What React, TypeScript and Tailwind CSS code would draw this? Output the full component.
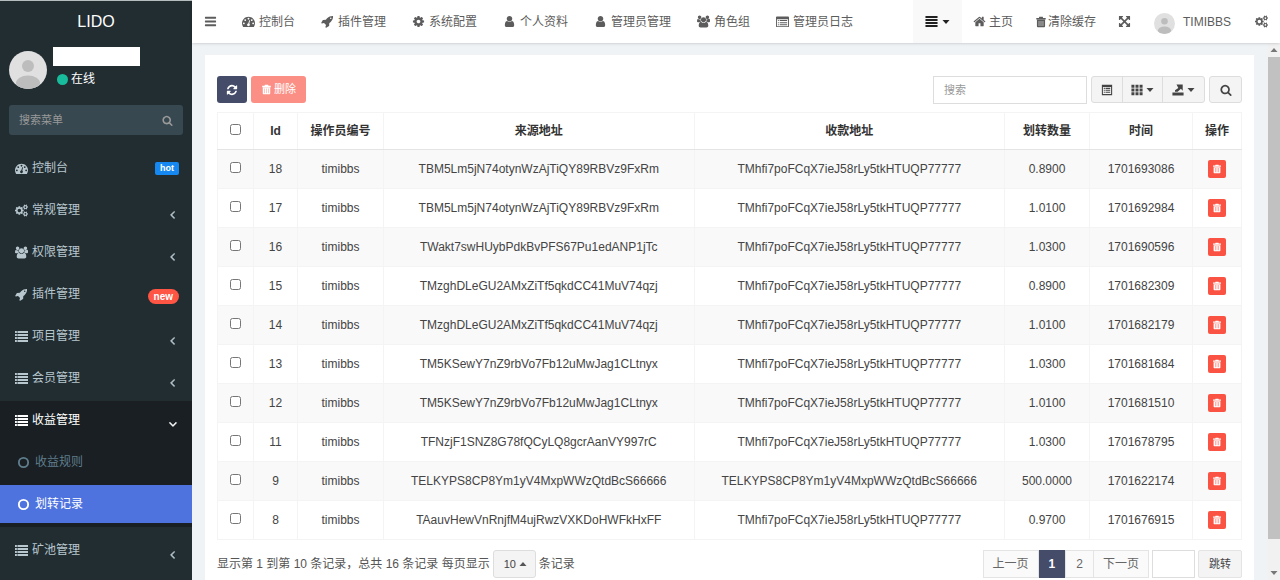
import React from "react";
import clsx from "clsx";

const ICONS = {
    bars: { w: 1792, d: "M1664 1344v128q0 26-19 45t-45 19h-1408q-26 0-45-19t-19-45v-128q0-26 19-45t45-19h1408q26 0 45 19t19 45zm0-512v128q0 26-19 45t-45 19h-1408q-26 0-45-19t-19-45v-128q0-26 19-45t45-19h1408q26 0 45 19t19 45zm0-512v128q0 26-19 45t-45 19h-1408q-26 0-45-19t-19-45v-128q0-26 19-45t45-19h1408q26 0 45 19t19 45z" },
    search: { w: 1792, d: "M1216 832q0-185-131.5-316.5t-316.5-131.5-316.5 131.5-131.5 316.5 131.5 316.5 316.5 131.5 316.5-131.5 131.5-316.5zm512 832q0 52-38 90t-90 38q-54 0-90-38l-343-342q-179 124-399 124-143 0-273.5-55.5t-225-150-150-225-55.5-273.5 55.5-273.5 150-225 225-150 273.5-55.5 273.5 55.5 225 150 150 225 55.5 273.5q0 220-124 399l343 343q37 37 37 90z" },
    dashboard: { w: 1792, d: "M384 1152q0-53-37.5-90.5t-90.5-37.5-90.5 37.5-37.5 90.5 37.5 90.5 90.5 37.5 90.5-37.5 37.5-90.5zm192-448q0-53-37.5-90.5t-90.5-37.5-90.5 37.5-37.5 90.5 37.5 90.5 90.5 37.5 90.5-37.5 37.5-90.5zm428 481l101-382q6-26-7.5-48.5t-38.5-29.5-48 6.5-30 39.5l-101 382q-60 5-107 43.5t-63 98.5q-20 77 20 146t117 89 146-20 89-117q16-60-6-117t-72-91zm660-33q0-53-37.5-90.5t-90.5-37.5-90.5 37.5-37.5 90.5 37.5 90.5 90.5 37.5 90.5-37.5 37.5-90.5zm-640-640q0-53-37.5-90.5t-90.5-37.5-90.5 37.5-37.5 90.5 37.5 90.5 90.5 37.5 90.5-37.5 37.5-90.5zm448 192q0-53-37.5-90.5t-90.5-37.5-90.5 37.5-37.5 90.5 37.5 90.5 90.5 37.5 90.5-37.5 37.5-90.5zm320 448q0 261-141 483-19 29-54 29h-1402q-35 0-54-29-141-221-141-483 0-182 71-348t191-286 286-191 348-71 348 71 286 191 191 286 71 348z" },
    rocket: { w: 1792, d: "M1440 448q0-40-28-68t-68-28-68 28-28 68 28 68 68 28 68-28 28-68zm224-288q0 249-75.5 430.5t-253.5 360.5q-81 80-195 176l-20 379q-2 16-16 26l-384 224q-7 4-16 4-12 0-23-9l-64-64q-13-14-8-32l85-276-281-281-276 85q-3 1-9 1-14 0-23-9l-64-64q-17-19-5-39l224-384q10-14 26-16l379-20q96-114 176-195 188-187 358-258t431-71q14 0 24 9.5t10 22.5z" },
    cog: { w: 1792, d: "M1152 896q0-106-75-181t-181-75-181 75-75 181 75 181 181 75 181-75 75-181zm512-109v222q0 12-8 23t-20 13l-185 28q-19 54-39 91 35 50 107 138 10 12 10 25t-9 23q-27 37-99 108t-94 71q-12 0-26-9l-138-108q-44 23-91 38-16 136-29 186-7 28-36 28h-222q-14 0-24.5-8.5t-11.5-21.5l-28-184q-49-16-90-37l-141 107q-10 9-25 9-14 0-25-11-126-114-165-168-7-10-7-23 0-12 8-23 15-21 51-66.5t54-70.5q-27-50-41-99l-183-27q-13-2-21-12.5t-8-23.5v-222q0-12 8-23t19-13l186-28q14-46 39-92-40-57-107-138-10-12-10-24 0-10 9-23 26-36 98.5-107.5t94.5-71.5q13 0 26 10l138 107q44-23 91-38 16-136 29-186 7-28 36-28h222q14 0 24.5 8.5t11.5 21.5l28 184q49 16 90 37l142-107q9-9 24-9 13 0 25 10 129 119 165 170 7 8 7 22 0 12-8 23-15 21-51 66.5t-54 70.5q26 50 41 98l183 28q13 2 21 12.5t8 23.5z" },
    cogs: { w: 1920, d: "M896 896q0-106-75-181t-181-75-181 75-75 181 75 181 181 75 181-75 75-181zm768 512q0-52-38-90t-90-38-90 38-38 90q0 53 37.5 90.5t90.5 37.5 90.5-37.5 37.5-90.5zm0-1024q0-52-38-90t-90-38-90 38-38 90q0 53 37.5 90.5t90.5 37.5 90.5-37.5 37.5-90.5zm-384 421v185q0 10-7 19.5t-16 10.5l-155 24q-11 35-32 76 34 48 90 115 7 11 7 20 0 12-7 19-23 30-82.5 89.5t-78.5 59.5q-11 0-21-7l-115-90q-37 19-77 31-11 108-23 155-7 24-30 24h-186q-11 0-20-7.5t-10-17.5l-23-153q-34-10-75-31l-118 89q-7 7-20 7-11 0-21-8-144-133-144-160 0-9 7-19 10-14 41-53t47-61q-23-44-35-82l-152-24q-10-1-17-9.5t-7-19.5v-185q0-10 7-19.5t16-10.5l155-24q11-35 32-76-34-48-90-115-7-11-7-20 0-12 7-20 22-30 82-89t79-59q11 0 21 7l115 90q34-18 77-32 11-108 23-154 7-24 30-24h186q11 0 20 7.5t10 17.5l23 153q34 10 75 31l118-89q8-7 20-7 11 0 21 8 144 133 144 160 0 8-7 19-12 16-42 54t-45 60q23 48 34 82l152 23q10 2 17 10.5t7 19.5zm640 533v140q0 16-149 31-12 27-30 52 51 113 51 138 0 4-4 7-122 71-124 71-8 0-46-47t-52-68q-20 2-30 2t-30-2q-14 21-52 68t-46 47q-2 0-124-71-4-3-4-7 0-25 51-138-18-25-30-52-149-15-149-31v-140q0-16 149-31 13-29 30-52-51-113-51-138 0-4 4-7 4-2 35-20t59-34 30-16q8 0 46 46.5t52 67.5q20-2 30-2t30 2q51-71 92-112l6-2q4 0 124 70 4 3 4 7 0 25-51 138 17 23 30 52 149 15 149 31zm0-1024v140q0 16-149 31-12 27-30 52 51 113 51 138 0 4-4 7-122 71-124 71-8 0-46-47t-52-68q-20 2-30 2t-30-2q-14 21-52 68t-46 47q-2 0-124-71-4-3-4-7 0-25 51-138-18-25-30-52-149-15-149-31v-140q0-16 149-31 13-29 30-52-51-113-51-138 0-4 4-7 4-2 35-20t59-34 30-16q8 0 46 46.5t52 67.5q20-2 30-2t30 2q51-71 92-112l6-2q4 0 124 70 4 3 4 7 0 25-51 138 17 23 30 52 149 15 149 31z" },
    user: { w: 1792, d: "M1536 1399q0 109-62.5 187t-150.5 78h-854q-88 0-150.5-78t-62.5-187q0-85 8.5-160.5t31.5-152 58.5-131 94-89 134.5-34.5q131 128 313 128t313-128q76 0 134.5 34.5t94 89 58.5 131 31.5 152 8.5 160.5zm-256-887q0 159-112.5 271.5t-271.5 112.5-271.5-112.5-112.5-271.5 112.5-271.5 271.5-112.5 271.5 112.5 112.5 271.5z" },
    group: { w: 1920, d: "M593 896q-162 5-265 128h-134q-82 0-138-40.5t-56-118.5q0-353 124-353 6 0 43.5 21t97.5 42.5 119 21.5q67 0 133-23-5 37-5 66 0 159 93 293zm1071 637q0 120-73 189.5t-194 69.5h-874q-121 0-194-69.5t-73-189.5q0-53 3.5-103.5t14-109 26.5-108.5 43-97.5 62-81 85.5-53.5 111.5-20q10 0 43 21.5t73 48 107 48 135 21.5 135-21.5 107-48 73-48 43-21.5q61 0 111.5 20t85.5 53.5 62 81 43 97.5 26.5 108.5 14 109 3.5 103.5zm-1024-1277q0 106-75 181t-181 75-181-75-75-181 75-181 181-75 181 75 75 181zm704 384q0 159-112.5 271.5t-271.5 112.5-271.5-112.5-112.5-271.5 112.5-271.5 271.5-112.5 271.5 112.5 112.5 271.5zm576 225q0 78-56 118.5t-138 40.5h-134q-103-123-265-128 93-134 93-293 0-29-5-66 66 23 133 23 59 0 119-21.5t97.5-42.5 43.5-21q124 0 124 353zm-128-609q0 106-75 181t-181 75-181-75-75-181 75-181 181-75 181 75 75 181z" },
    home: { w: 1792, d: "M1472 992v480q0 26-19 45t-45 19h-384v-384h-256v384h-384q-26 0-45-19t-19-45v-480q0-1 .5-3t.5-3l575-474 575 474q1 2 1 6zm223-69l-62 74q-8 9-21 11h-3q-13 0-21-7l-692-577-692 577q-12 8-24 7-13-2-21-11l-62-74q-8-10-7-23.5t11-21.5l719-599q32-26 76-26t76 26l244 204v-195q0-14 9-23t23-9h192q14 0 23 9t9 23v408l219 182q10 8 11 21.5t-7 23.5z" },
    trash: { w: 1792, d: "M640 128h512l64 160h384v224h-1408v-224h384zM288 576h1216v960q0 128-128 128h-960q-128 0-128-128zM560 736v752h80v-752zM856 736v752h80v-752zM1152 736v752h80v-752z" },
    refresh: { w: 1792, d: "M1639 1056q0 5-1 7-64 268-268 434.5t-478 166.5q-146 0-282.5-55t-243.5-157l-129 129q-19 19-45 19t-45-19-19-45v-448q0-26 19-45t45-19h448q26 0 45 19t19 45-19 45l-137 137q71 66 161 102t187 36q134 0 250-65t186-179q11-17 53-117 8-23 30-23h192q13 0 22.5 9.5t9.5 22.5zm25-800v448q0 26-19 45t-45 19h-448q-26 0-45-19t-19-45 19-45l138-138q-148-137-349-137-134 0-250 65t-186 179q-11 17-53 117-8 23-30 23h-199q-13 0-22.5-9.5t-9.5-22.5v-7q65-268 270-434.5t480-166.5q146 0 284 55.5t245 156.5l130-129q19-19 45-19t45 19 19 45z" },
    arrows: { w: 1792, d: "M1411 541l-355 355 355 355 144-144q29-31 70-14 39 17 39 59v448q0 26-19 45t-45 19h-448q-42 0-59-40-17-39 14-69l144-144-355-355-355 355 144 144q31 30 14 69-17 40-59 40h-448q-26 0-45-19t-19-45v-448q0-42 40-59 39-17 69 14l144 144 355-355-355-355-144 144q-19 19-45 19-12 0-24-5-40-17-40-59v-448q0-26 19-45t45-19h448q42 0 59 40 17 39-14 69l-144 144 355 355 355-355-144-144q-31-30-14-69 17-40 59-40h448q26 0 45 19t19 45v448q0 42-39 59-13 5-25 5-26 0-45-19z" },
    angle: { w: 1792, d: "M1203 544q0 13-10 23l-393 393 393 393q10 10 10 23t-10 23l-50 50q-10 10-23 10t-23-10l-466-466q-10-10-10-23t10-23l466-466q10-10 23-10t23 10l50 50q10 10 10 23z" },
    list: { w: 1792, d: "M0 128h256v288h-256zM340 128h1452v288h-1452zM0 544h256v288h-256zM340 544h1452v288h-1452zM0 960h256v288h-256zM340 960h1452v288h-1452zM0 1376h256v288h-256zM340 1376h1452v288h-1452z" },
    listAlt: { w: 1792, d: "M128 192h1536q128 0 128 128v1216q0 128-128 128h-1536q-128 0-128-128v-1216q0-128 128-128zM128 576v960h1536v-960zM256 704h128v128h-128zM512 704h1024v128h-1024zM256 992h128v128h-128zM512 992h1024v128h-1024zM256 1280h128v128h-128zM512 1280h1024v128h-1024z" },
    align: { w: 1792, d: "M64 128h1664v288h-1664zM64 544h1664v288h-1664zM64 960h1664v288h-1664zM64 1376h1664v288h-1664z" },
    detail: { w: 1792, d: "M128 128h1536v1536h-1536zM288 448v1056h1216v-1056zM416 576h160v160h-160zM672 576h704v160h-704zM416 864h160v160h-160zM672 864h704v160h-704zM416 1152h160v160h-160zM672 1152h704v160h-704z" },
    grid: { w: 1792, d: "M64 128h448v448h-448zM672 128h448v448h-448zM1280 128h448v448h-448zM64 672h448v448h-448zM672 672h448v448h-448zM1280 672h448v448h-448zM64 1216h448v448h-448zM672 1216h448v448h-448zM1280 1216h448v448h-448z" },
    exportFile: { w: 1792, d: "M672 64h928v928l-272-272-480 448h-400v-224l496-336zM64 1280h1664v448h-1664z" },
    ring: { w: 1792, d: "M896 128a768 768 0 1 0 0 1536a768 768 0 1 0 0-1536zM896 384a512 512 0 1 1 0 1024a512 512 0 1 1 0-1024z" },
};

type IconName = keyof typeof ICONS;

const Icon = ({ name, className = "size-[13px]" }: { name: IconName; className?: string }) => (
    <svg viewBox={`0 0 ${ICONS[name].w} 1792`} fill="currentColor" fillRule="evenodd" aria-hidden="true" className={clsx("shrink-0", className)}>
        <path d={ICONS[name].d} />
    </svg>
);

const Caret = ({ up = false, className = "" }: { up?: boolean; className?: string }) => (
    <svg viewBox="0 0 8 4" fill="currentColor" aria-hidden="true" className={clsx("h-1 w-2 shrink-0", up && "rotate-180", className)}>
        <path d="M0.5 0h7L4 4z" />
    </svg>
);

const Avatar = ({ className }: { className: string }) => (
    <svg viewBox="0 0 38 38" aria-hidden="true" className={clsx("shrink-0 rounded-full", className)}>
        <rect width="38" height="38" fill="#e0e0e0" />
        <circle cx="19" cy="15" r="6" fill="#bdbdbd" />
        <ellipse cx="19" cy="32" rx="12" ry="7.5" fill="#bdbdbd" />
    </svg>
);

const menu: { icon: IconName; label: string; badge?: "hot" | "new"; children?: string[] }[] = [
    { icon: "dashboard", label: "控制台", badge: "hot" },
    { icon: "cogs", label: "常规管理" },
    { icon: "group", label: "权限管理" },
    { icon: "rocket", label: "插件管理", badge: "new" },
    { icon: "list", label: "项目管理" },
    { icon: "list", label: "会员管理" },
    { icon: "list", label: "收益管理", children: ["收益规则", "划转记录"] },
    { icon: "list", label: "矿池管理" },
];

const tabs: { icon: IconName; label: string }[] = [
    { icon: "dashboard", label: "控制台" },
    { icon: "rocket", label: "插件管理" },
    { icon: "cog", label: "系统配置" },
    { icon: "user", label: "个人资料" },
    { icon: "user", label: "管理员管理" },
    { icon: "group", label: "角色组" },
    { icon: "listAlt", label: "管理员日志" },
];

const TO = "TMhfi7poFCqX7ieJ58rLy5tkHTUQP77777";

const rows = [
    { id: 18, from: "TBM5Lm5jN74otynWzAjTiQY89RBVz9FxRm", to: TO, amount: "0.8900", time: "1701693086" },
    { id: 17, from: "TBM5Lm5jN74otynWzAjTiQY89RBVz9FxRm", to: TO, amount: "1.0100", time: "1701692984" },
    { id: 16, from: "TWakt7swHUybPdkBvPFS67Pu1edANP1jTc", to: TO, amount: "1.0300", time: "1701690596" },
    { id: 15, from: "TMzghDLeGU2AMxZiTf5qkdCC41MuV74qzj", to: TO, amount: "0.8900", time: "1701682309" },
    { id: 14, from: "TMzghDLeGU2AMxZiTf5qkdCC41MuV74qzj", to: TO, amount: "1.0100", time: "1701682179" },
    { id: 13, from: "TM5KSewY7nZ9rbVo7Fb12uMwJag1CLtnyx", to: TO, amount: "1.0300", time: "1701681684" },
    { id: 12, from: "TM5KSewY7nZ9rbVo7Fb12uMwJag1CLtnyx", to: TO, amount: "1.0100", time: "1701681510" },
    { id: 11, from: "TFNzjF1SNZ8G78fQCyLQ8gcrAanVY997rC", to: TO, amount: "1.0300", time: "1701678795" },
    { id: 9, from: "TELKYPS8CP8Ym1yV4MxpWWzQtdBcS66666", to: "TELKYPS8CP8Ym1yV4MxpWWzQtdBcS66666", amount: "500.0000", time: "1701622174" },
    { id: 8, from: "TAauvHewVnRnjfM4ujRwzVXKDoHWFkHxFF", to: TO, amount: "0.9700", time: "1701676915" },
];

const Sidebar = () => {
    return (
        <aside className="flex w-48 shrink-0 flex-col overflow-hidden border-t border-[#b5bdbf] bg-[#222d32] text-[#b8c7ce]">
            <a href="#" className="flex h-[42px] shrink-0 items-center justify-center text-base text-white">LIDO</a>
            <div className="flex h-[54px] shrink-0 gap-[6px] px-[9px] pt-1 text-white">
                <Avatar className="mt-1 size-[38px]" />
                <div>
                    <div className="h-[19px] w-[87px] bg-white" />
                    <a href="#" className="flex items-center gap-[3px] pt-[5px] pl-1 leading-4">
                        <span className="size-[11px] rounded-full bg-[#18bc9c]" />
                        在线
                    </a>
                </div>
            </div>
            <form className="mx-[9px] mt-2 flex h-[30px] shrink-0 items-center rounded-[3px] bg-[#374850] px-[10px]">
                <input type="text" aria-label="搜索菜单" placeholder="搜索菜单" className="min-w-0 flex-1 bg-transparent text-[11px] outline-none placeholder:text-[#999]" />
                <button type="button" aria-label="搜索" className="text-[#999]">
                    <Icon name="search" className="size-[11px]" />
                </button>
            </form>
            <ul className="mt-[14px] flex flex-col gap-1">
                {menu.map((item) => (
                    <li key={item.label} className={clsx(item.children && "bg-[#191f23] pb-1 text-white")}>
                        <a href="#" className="flex h-[38px] items-center pr-[13px] pl-[15px]">
                            <Icon name={item.icon} />
                            <span className="ml-1 flex-1">{item.label}</span>
                            {item.badge === "hot" && <span className="rounded-xs bg-[#1688f1] px-[5px] text-[9px] leading-[13px] font-bold text-white">hot</span>}
                            {item.badge === "new" && <span className="mt-1 rounded-full bg-[#ff5545] px-[6px] text-[10px] leading-[15px] font-bold text-white">new</span>}
                            {!item.badge && <Icon name="angle" className={clsx("mt-2 size-[13px] stroke-current stroke-[80]", item.children && "-rotate-90")} />}
                        </a>
                        {item.children && (
                            <ul className="mt-1 flex flex-col gap-1">
                                {item.children.map((child, i) => (
                                    <li key={child}>
                                        <a href="#" className={clsx("flex h-[38px] items-center gap-[5px] pl-[17px]", i === 1 ? "bg-[#4e73df] text-white" : "text-[#5f7d8c]")}>
                                            <Icon name="ring" />
                                            {child}
                                        </a>
                                    </li>
                                ))}
                            </ul>
                        )}
                    </li>
                ))}
            </ul>
        </aside>
    );
};

const Header = () => {
    return (
        <header className="z-10 flex h-[43px] shrink-0 items-stretch bg-white text-[#5c5c5c] shadow-sm">
            <button type="button" aria-label="切换菜单" className="px-3">
                <Icon name="bars" />
            </button>
            <nav className="flex">
                {tabs.map((tab) => (
                    <a key={tab.label} href="#" className="flex items-center gap-1 px-[13px]">
                        <Icon name={tab.icon} />
                        {tab.label}
                    </a>
                ))}
            </nav>
            <div className="ml-auto flex">
                <button type="button" aria-label="标签列表" className="flex items-center gap-1 bg-[#f9f9f9] px-3 text-[#222]">
                    <Icon name="align" />
                    <Caret />
                </button>
                <a href="#" className="flex items-center gap-[3px] px-[11px]">
                    <Icon name="home" />
                    主页
                </a>
                <a href="#" className="flex items-center gap-px px-[11px]">
                    <Icon name="trash" className="size-3" />
                    清除缓存
                </a>
                <button type="button" aria-label="全屏" className="px-[11px]">
                    <Icon name="arrows" />
                </button>
                <a href="#" className="flex items-center gap-2 px-3">
                    <Avatar className="mt-1 size-[21px]" />
                    TIMIBBS
                </a>
                <button type="button" aria-label="设置" className="px-3">
                    <Icon name="cogs" />
                </button>
            </div>
        </header>
    );
};

const Toolbar = () => {
    return (
        <div className="flex items-start">
            <button type="button" aria-label="刷新" className="flex h-[27px] w-[30px] items-center justify-center rounded-[3px] bg-[#444c69] text-white">
                <Icon name="refresh" className="size-3" />
            </button>
            <button type="button" disabled className="ml-1 flex h-[27px] items-center gap-[2px] rounded-[3px] bg-[#fb8f86] px-[10px] text-[11px] text-white">
                <Icon name="trash" className="size-[11px]" />
                删除
            </button>
            <input type="text" aria-label="搜索" placeholder="搜索" className="ml-auto h-7 w-[154px] border border-[#ddd] px-[10px] text-[11px] outline-none placeholder:text-[#999]" />
            <div className="ml-1 flex h-[27px] divide-x divide-[#ddd] rounded-[3px] border border-[#ddd] bg-[#f4f4f4] text-[#444]">
                <button type="button" aria-label="切换" className="px-[9px]">
                    <Icon name="detail" className="size-3" />
                </button>
                <button type="button" aria-label="列" className="flex items-center gap-[3px] px-2">
                    <Icon name="grid" className="size-3" />
                    <Caret />
                </button>
                <button type="button" aria-label="导出数据" className="flex items-center gap-[3px] px-[9px]">
                    <Icon name="exportFile" className="size-3" />
                    <Caret />
                </button>
            </div>
            <button type="button" aria-label="普通搜索" className="ml-1 flex h-[27px] w-[33px] items-center justify-center rounded-[3px] border border-[#ddd] bg-[#f4f4f4] text-[#444]">
                <Icon name="search" className="size-3" />
            </button>
        </div>
    );
};

const RecordTable = () => {
    return (
        <table className="mt-2 w-full table-fixed border-collapse text-center text-[#444] [&_td]:border [&_td]:border-[#f4f4f4] [&_th]:border [&_th]:border-[#f4f4f4]">
            <colgroup>
                <col className="w-9" />
                <col className="w-11" />
                <col className="w-[86px]" />
                <col />
                <col />
                <col className="w-[85px]" />
                <col className="w-[103px]" />
                <col className="w-[49px]" />
            </colgroup>
            <thead className="[&_th]:border-b-[#e4e4e4]">
                <tr className="h-[37px] text-[#333]">
                    <th><input type="checkbox" aria-label="全选" className="mx-auto mb-1 block size-[11px]" /></th>
                    <th>Id</th>
                    <th>操作员编号</th>
                    <th>来源地址</th>
                    <th>收款地址</th>
                    <th>划转数量</th>
                    <th>时间</th>
                    <th>操作</th>
                </tr>
            </thead>
            <tbody>
                {rows.map((row) => (
                    <tr key={row.id} className="h-[39px] odd:bg-[#f9f9f9]">
                        <td><input type="checkbox" aria-label={`选择 ${row.id}`} className="mx-auto mb-1 block size-[11px]" /></td>
                        <td>{row.id}</td>
                        <td>timibbs</td>
                        <td>{row.from}</td>
                        <td>{row.to}</td>
                        <td>{row.amount}</td>
                        <td>{row.time}</td>
                        <td>
                            <button type="button" aria-label="删除" className="mx-auto flex size-[18px] items-center justify-center rounded-xs bg-[#fb5343] text-white">
                                <Icon name="trash" className="size-[10px]" />
                            </button>
                        </td>
                    </tr>
                ))}
            </tbody>
        </table>
    );
};

const Pagination = () => {
    return (
        <div className="mt-[10px] flex items-center justify-between pb-4 text-[#555]">
            <div className="flex items-center gap-[3px]">
                <span>显示第 1 到第 10 条记录，总共 16 条记录 每页显示</span>
                <span className="relative">
                    <select aria-label="每页显示" defaultValue="10" className="block h-7 w-[43px] appearance-none rounded-[3px] border border-[#ddd] bg-[#f4f4f4] pl-[10px] text-[11px] text-[#444]">
                        <option>10</option>
                        <option>25</option>
                        <option>50</option>
                    </select>
                    <Caret up className="pointer-events-none absolute top-3 right-[9px]" />
                </span>
                <span>条记录</span>
            </div>
            <div className="flex items-center gap-[3px]">
                <nav className="flex h-7 divide-x divide-[#e4e4e4] border border-[#e4e4e4] bg-[#fafafa] leading-[26px] text-[#666]">
                    <a href="#" className="px-[9px]">上一页</a>
                    <a href="#" className="-my-px bg-[#444c69] px-[10px] leading-7 font-bold text-white">1</a>
                    <a href="#" className="px-[10px]">2</a>
                    <a href="#" className="px-[9px]">下一页</a>
                </nav>
                <input type="text" aria-label="页码" className="h-7 w-[43px] border border-[#ddd]" />
                <button type="button" className="h-7 w-11 rounded-xs border border-[#e4e4e4] bg-[#f4f4f4] text-[11px] text-[#444]">跳转</button>
            </div>
        </div>
    );
};

const App = () => {
    return (
        <div className="flex h-screen overflow-hidden bg-[#eff3f6] font-['Liberation_Sans','Noto_Sans_CJK_SC',sans-serif] text-xs">
            <Sidebar />
            <div className="flex min-w-0 flex-1 flex-col">
                <Header />
                <div className="flex min-h-0 flex-1">
                    <main className="min-w-0 flex-1 overflow-hidden pt-3 pr-[14px] pl-[13px]">
                        <section className="bg-white px-3 pt-[21px]">
                            <Toolbar />
                            <RecordTable />
                            <Pagination />
                        </section>
                    </main>
                    <div className="flex w-3 flex-col items-center bg-[#f1f1f1] text-[#777]">
                        <Caret up className="my-[5px]" />
                        <div className="w-full flex-1 bg-[#c1c1c1]" />
                        <Caret className="mt-8 mb-[5px]" />
                    </div>
                </div>
            </div>
        </div>
    );
};

export default App;
